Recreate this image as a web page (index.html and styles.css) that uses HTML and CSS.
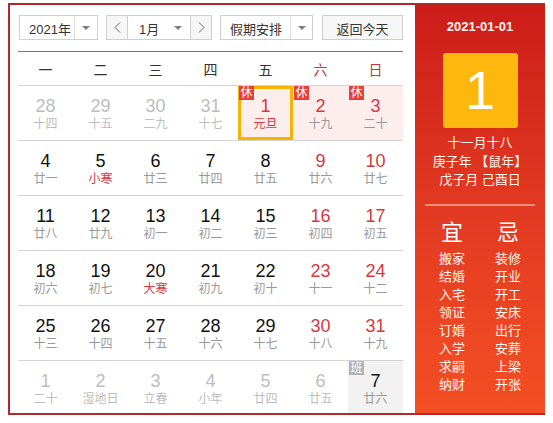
FILE: index.html
```html
<!DOCTYPE html>
<html lang="zh-CN">
<head>
<meta charset="utf-8">
<title>万年历</title>
<link rel="stylesheet" href="styles.css">
</head>
<body>
<div class="cal">
  <div class="main">
    <div class="toolbar">
      <div class="sel year">
        <span class="sel-text">2021年</span>
        <span class="sel-arrow"><i class="tri"></i></span>
      </div>
      <div class="sel month">
        <span class="nav nav-l"><svg width="7" height="11" viewBox="0 0 7 11"><polyline points="6,0.5 1,5.5 6,10.5" fill="none" stroke="#666" stroke-width="1"/></svg></span>
        <span class="sel-text">1月</span>
        <span class="sel-arrow plain"><i class="tri"></i></span>
        <span class="nav nav-r"><svg width="7" height="11" viewBox="0 0 7 11"><polyline points="1,0.5 6,5.5 1,10.5" fill="none" stroke="#666" stroke-width="1"/></svg></span>
      </div>
      <div class="sel hol">
        <span class="sel-text">假期安排</span>
        <span class="sel-arrow"><i class="tri"></i></span>
      </div>
      <button class="today">返回今天</button>
    </div>

    <div class="weekhead">
      <span>一</span><span>二</span><span>三</span><span>四</span><span>五</span><span class="we">六</span><span class="we">日</span>
    </div>

    <div class="weeks">
      <div class="week">
        <div class="day other"><b>28</b><i>十四</i></div>
        <div class="day other"><b>29</b><i>十五</i></div>
        <div class="day other"><b>30</b><i>二九</i></div>
        <div class="day other"><b>31</b><i>十七</i></div>
        <div class="day rest sel-day red"><span class="badge">休</span><b>1</b><i class="term">元旦</i></div>
        <div class="day rest red"><span class="badge">休</span><b>2</b><i>十九</i></div>
        <div class="day rest red"><span class="badge">休</span><b>3</b><i>二十</i></div>
      </div>
      <div class="week">
        <div class="day"><b>4</b><i>廿一</i></div>
        <div class="day"><b>5</b><i class="term">小寒</i></div>
        <div class="day"><b>6</b><i>廿三</i></div>
        <div class="day"><b>7</b><i>廿四</i></div>
        <div class="day"><b>8</b><i>廿五</i></div>
        <div class="day red"><b>9</b><i>廿六</i></div>
        <div class="day red"><b>10</b><i>廿七</i></div>
      </div>
      <div class="week">
        <div class="day"><b>11</b><i>廿八</i></div>
        <div class="day"><b>12</b><i>廿九</i></div>
        <div class="day"><b>13</b><i>初一</i></div>
        <div class="day"><b>14</b><i>初二</i></div>
        <div class="day"><b>15</b><i>初三</i></div>
        <div class="day red"><b>16</b><i>初四</i></div>
        <div class="day red"><b>17</b><i>初五</i></div>
      </div>
      <div class="week">
        <div class="day"><b>18</b><i>初六</i></div>
        <div class="day"><b>19</b><i>初七</i></div>
        <div class="day"><b>20</b><i class="term">大寒</i></div>
        <div class="day"><b>21</b><i>初九</i></div>
        <div class="day"><b>22</b><i>初十</i></div>
        <div class="day red"><b>23</b><i>十一</i></div>
        <div class="day red"><b>24</b><i>十二</i></div>
      </div>
      <div class="week">
        <div class="day"><b>25</b><i>十三</i></div>
        <div class="day"><b>26</b><i>十四</i></div>
        <div class="day"><b>27</b><i>十五</i></div>
        <div class="day"><b>28</b><i>十六</i></div>
        <div class="day"><b>29</b><i>十七</i></div>
        <div class="day red"><b>30</b><i>十八</i></div>
        <div class="day red"><b>31</b><i>十九</i></div>
      </div>
      <div class="week last">
        <div class="day other"><b>1</b><i>二十</i></div>
        <div class="day other"><b>2</b><i>湿地日</i></div>
        <div class="day other"><b>3</b><i>立春</i></div>
        <div class="day other"><b>4</b><i>小年</i></div>
        <div class="day other"><b>5</b><i>廿四</i></div>
        <div class="day other"><b>6</b><i>廿五</i></div>
        <div class="day work"><span class="badge grey">班</span><b>7</b><i>廿六</i></div>
      </div>
    </div>
  </div>

  <div class="side">
    <div class="side-date">2021-01-01</div>
    <div class="big-day">1</div>
    <div class="lunar">
      <div>十一月十八</div>
      <div>庚子年 【鼠年】</div>
      <div>戊子月 己酉日</div>
    </div>
    <div class="divider"></div>
    <div class="yiji">
      <div class="yj-col">
        <div class="yj-title">宜</div>
        <div>搬家</div><div>结婚</div><div>入宅</div><div>领证</div>
        <div>订婚</div><div>入学</div><div>求嗣</div><div>纳财</div>
      </div>
      <div class="yj-col">
        <div class="yj-title">忌</div>
        <div>装修</div><div>开业</div><div>开工</div><div>安床</div>
        <div>出行</div><div>安葬</div><div>上梁</div><div>开张</div>
      </div>
    </div>
  </div>
</div>
</body>
</html>
```

FILE: styles.css
```css
body {
  margin: 0;
  background: #fff;
  font-family: "Liberation Sans", "Noto Sans CJK SC", sans-serif;
}

.cal {
  display: flex;
  width: 535px;
  height: 408px;
  margin: 3px 0 0 8px;
  border: 2px solid #b3282b;
  border-right: 0;
}

.main {
  width: 405px;
  box-sizing: border-box;
  padding: 10px 12px 0 8px;
  display: flex;
  flex-direction: column;
}

/* toolbar */
.toolbar {
  display: flex;
  height: 25px;
  padding: 0 0 11px 1px;
  border-bottom: 1px solid #c9545a;
}

.sel {
  display: flex;
  height: 25px;
  box-sizing: border-box;
  border: 1px solid #cfcfcf;
  background: #fff;
  font-size: 13px;
  color: #333;
}

.sel-text {
  display: flex;
  align-items: center;
  box-sizing: border-box;
  padding-top: 1px;
}

.sel-arrow {
  display: flex;
  align-items: center;
  justify-content: center;
  border-left: 1px solid #dcdcdc;
}

.sel-arrow.plain {
  border-left: 0;
}

.tri {
  display: block;
  width: 0;
  height: 0;
  border-left: 4px solid transparent;
  border-right: 4px solid transparent;
  border-top: 4px solid #808080;
}

.year {
  width: 79px;
  margin-right: 8px;
}
.year .sel-text {
  width: 54px;
  padding-left: 9px;
}
.year .sel-arrow {
  width: 22px;
}

.month {
  width: 106px;
  margin-right: 8px;
}
.month .sel-text {
  width: 38px;
  padding-left: 11px;
}
.month .sel-arrow {
  width: 24px;
}
.nav {
  width: 20px;
  display: flex;
  align-items: center;
  justify-content: center;
  background: #f6f6f6;
}
.nav-l {
  border-right: 1px solid #cfcfcf;
}
.nav-r {
  border-left: 1px solid #cfcfcf;
}

.hol {
  width: 93px;
  margin-right: 9px;
}
.hol .sel-text {
  width: 69px;
  padding-left: 9px;
}
.hol .sel-arrow {
  width: 21px;
}

.today {
  width: 81px;
  height: 25px;
  box-sizing: border-box;
  border: 1px solid #cfcfcf;
  background: #f7f7f7;
  font-family: inherit;
  font-size: 13px;
  color: #333;
  padding: 1px 0 0;
  margin: 0;
}

/* week header */
.weekhead {
  display: grid;
  grid-template-columns: repeat(7, 55px);
  height: 33px;
  align-items: center;
  justify-items: center;
  border-bottom: 1px solid #d3d3d3;
  font-size: 14px;
  color: #333;
}
.weekhead .we {
  color: #c8343a;
}

/* grid */
.week {
  display: grid;
  grid-template-columns: repeat(7, 55px);
  height: 54px;
  border-bottom: 1px solid #d3d3d3;
}
.week.last {
  height: 52px;
  border-bottom: 0;
}

.day {
  position: relative;
  display: flex;
  flex-direction: column;
  align-items: center;
  box-sizing: border-box;
  padding-top: 10px;
}
.day b {
  font-weight: normal;
  font-size: 18px;
  line-height: 20px;
  color: #111;
}
.day i {
  font-style: normal;
  font-size: 12px;
  line-height: 16px;
  color: #999;
}
.day.red b {
  color: #d8373d;
}
.day i.term {
  color: #d8373d;
}
.day.other b {
  color: #bdbdbd;
}
.day.other i {
  color: #bdbdbd;
}

.day.rest {
  background: #fdeeee;
}
.day.sel-day {
  box-shadow: inset 0 0 0 3px #f6b300;
}
.day.work {
  background: #f2f2f2;
}

.badge {
  position: absolute;
  top: 0;
  left: 1px;
  width: 15px;
  height: 14px;
  background: #e5403d;
  color: #fff;
  font-size: 12px;
  line-height: 14px;
  text-align: center;
}
.badge.grey {
  background: #b4b4b4;
}

/* side panel */
.side {
  width: 130px;
  background: linear-gradient(#cc1d19, #e23a22 50%, #f34f24);
  color: #fff;
  display: flex;
  flex-direction: column;
  align-items: center;
}

.side-date {
  margin-top: 14px;
  font-size: 13px;
  font-weight: bold;
  line-height: 16px;
  color: #fff4ec;
}

.big-day {
  margin-top: 18px;
  width: 75px;
  height: 75px;
  background: #fdb80e;
  border-radius: 3px;
  color: #fff;
  font-size: 54px;
  line-height: 75px;
  text-align: center;
}

.lunar {
  margin-top: 6px;
  font-size: 13px;
  line-height: 18.5px;
  text-align: center;
  color: #fff4ec;
}

.divider {
  margin-top: 14px;
  width: 110px;
  height: 2px;
  background: #f08d76;
}

.yiji {
  margin-top: 14px;
  display: grid;
  grid-template-columns: 40px 40px;
  column-gap: 16px;
  justify-content: center;
  font-size: 13px;
  line-height: 18px;
  text-align: center;
  color: #fff4ec;
}

.yj-title {
  font-size: 22px;
  line-height: 26px;
  margin-bottom: 4px;
  color: #fff;
}
```
